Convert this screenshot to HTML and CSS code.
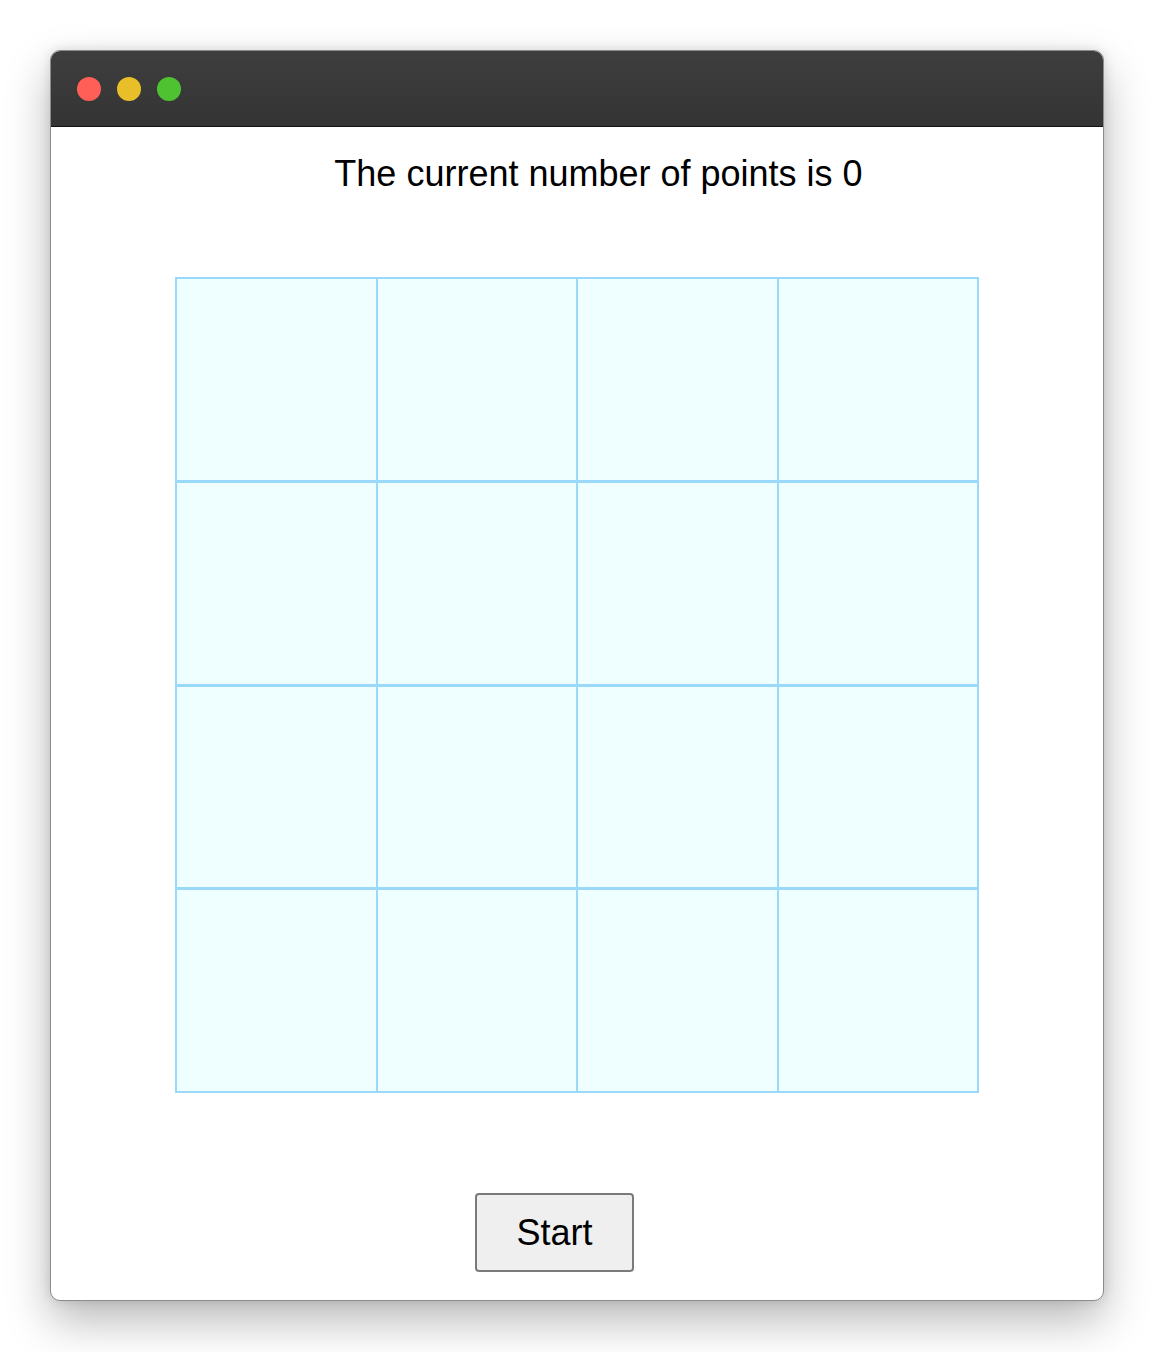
FILE: index.html
```html
<!DOCTYPE html>
<html>
<head>
<meta charset="utf-8">
<link rel="stylesheet" href="styles.css">
</head>
<body>
<div class="window">
  <div class="titlebar">
    <span class="light red"></span>
    <span class="light yellow"></span>
    <span class="light green"></span>
  </div>
  <div class="content">
    <div class="score">The current number of points is 0</div>
    <div class="board">
      <div class="cell"></div><div class="cell"></div><div class="cell"></div><div class="cell"></div>
      <div class="cell"></div><div class="cell"></div><div class="cell"></div><div class="cell"></div>
      <div class="cell"></div><div class="cell"></div><div class="cell"></div><div class="cell"></div>
      <div class="cell"></div><div class="cell"></div><div class="cell"></div><div class="cell"></div>
    </div>
    <div class="actions">
      <button class="start">Start</button>
    </div>
  </div>
</div>
</body>
</html>
```
FILE: styles.css
```css
* { box-sizing: border-box; }
html, body { margin: 0; padding: 0; background: #ffffff; }
body {
  font-family: "Liberation Sans", Arial, sans-serif;
  padding: 50px 0 51px 50px;
}

.window {
  width: 1054px;
  height: 1251px;
  background: #ffffff;
  border: 1px solid #8c8c8c;
  border-radius: 10px;
  overflow: hidden;
  box-shadow: 0 20px 45px rgba(0, 0, 0, 0.28), 0 0 12px rgba(0, 0, 0, 0.12);
  display: flex;
  flex-direction: column;
}

.titlebar {
  height: 76px;
  flex: none;
  background: linear-gradient(#3e3e3e, #343434);
  border-bottom: 1px solid #111;
  display: flex;
  align-items: flex-start;
  gap: 16px;
  padding: 26px 0 0 26px;
}
.light {
  width: 24px;
  height: 24px;
  border-radius: 50%;
  display: block;
}
.red { background: #ff5f57; }
.yellow { background: #e8bf29; }
.green { background: #4fc232; }

.content {
  flex: 1;
  display: flex;
  flex-direction: column;
  align-items: center;
  padding-top: 27px;
}

.score {
  font-size: 36px;
  line-height: 40px;
  color: #000;
  margin-left: 43px;
  white-space: nowrap;
}

.board {
  margin-top: 83px;
  width: 804px;
  height: 816px;
  border: 1px solid #9bd9fb;
  background: #9bd9fb;
  display: grid;
  grid-template-columns: repeat(4, 1fr);
  grid-template-rows: repeat(4, 1fr);
  row-gap: 1px;
}
.cell {
  background: #efffff;
  border: 1px solid #9bd9fb;
}

.actions {
  margin-top: 100px;
  margin-left: -45px;
}
.start {
  width: 159px;
  height: 79px;
  background: #efefef;
  border: 2px solid #7a7a7a;
  border-radius: 4px;
  font-family: "Liberation Sans", Arial, sans-serif;
  font-size: 36px;
  color: #000;
  padding: 0;
}
```
